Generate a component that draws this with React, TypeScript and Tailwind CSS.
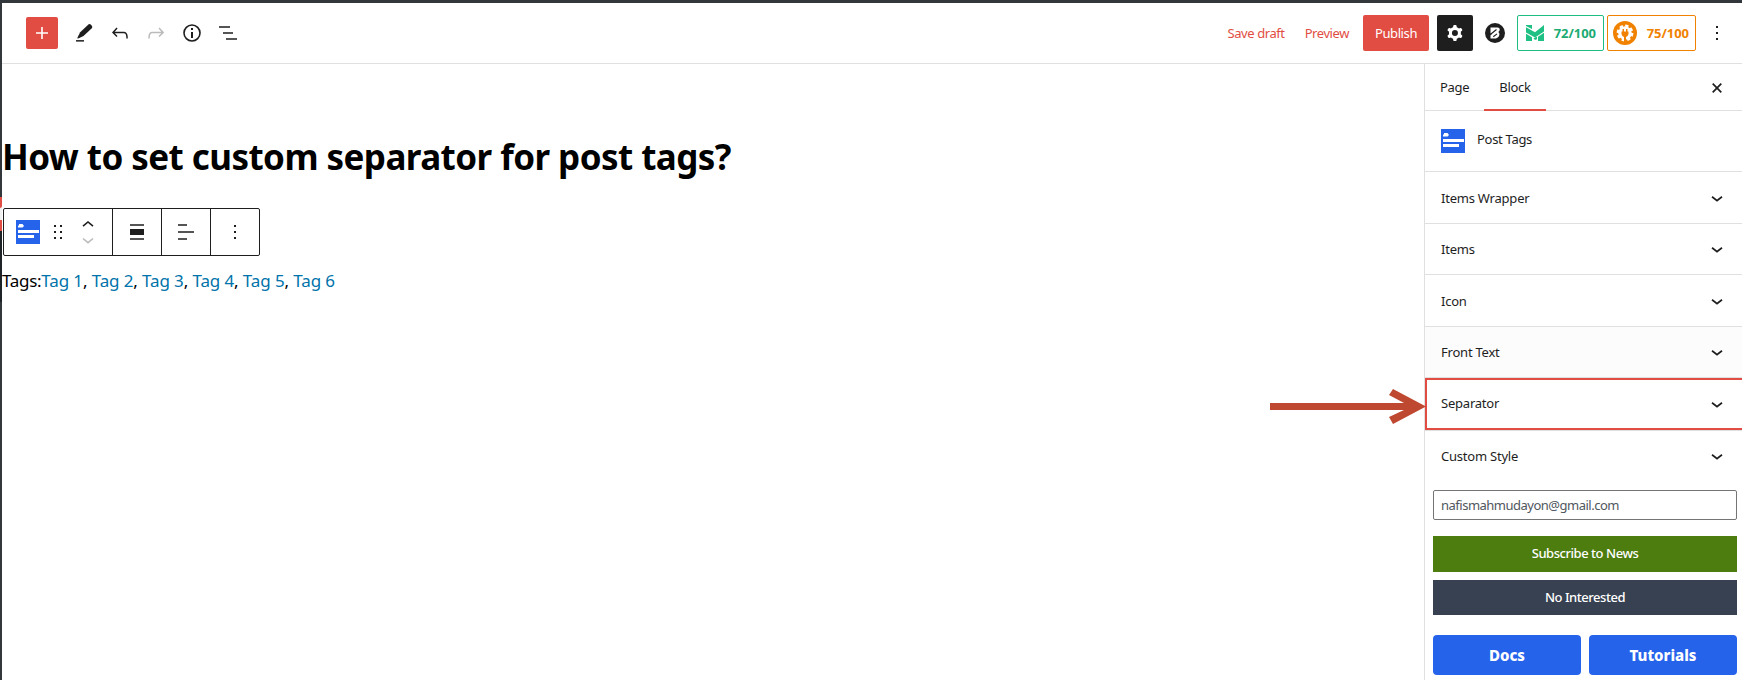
import React from "react";

function T({ children, className = "" }: { children: React.ReactNode; className?: string }) {
  return <span className={`whitespace-nowrap ${className}`}>{children}</span>;
}

function TagsIcon() {
  return (
    <svg width="24" height="24" viewBox="0 0 24 24" className="shrink-0">
      <rect width="24" height="24" fill="#2563eb" />
      <path d="M2 7.500V6l1-1V4h3.500L8 6 6.500 7.500z" fill="#fff" />
      <rect x="2" y="10" width="21" height="3" fill="#fff" />
      <rect x="2" y="15" width="16" height="3" fill="#fff" />
    </svg>
  );
}

function Chevron() {
  return (
    <svg width="24" height="24" viewBox="0 0 24 24" className="shrink-0">
      <path d="M17.500 11.400 12 15.800l-5.500-4.400 1-1.400 4.500 3.600 4.500-3.600 1 1.400z" fill="#1e1e1e" />
    </svg>
  );
}

function Row({ label, className }: { label: string; className: string }) {
  return (
    <div className={`flex shrink-0 items-center justify-between pr-[13px] pl-4 ${className}`}>
      <T className="pt-[2px] text-[13px] tracking-[-0.22px] text-[#1e1e1e]">{label}</T>
      <Chevron />
    </div>
  );
}

function Dots() {
  return (
    <svg width="24" height="24" viewBox="0 0 24 24">
      <path d="M13 19h-2v-2h2v2zm0-6h-2v-2h2v2zm0-6h-2V5h2v2z" fill="#1e1e1e" />
    </svg>
  );
}

function Header() {
  return (
    <header className="flex h-[61px] shrink-0 items-center border-b border-[#e0e0e0] pb-[7px] pl-6">
      <div className="flex flex-1 items-center gap-3 pt-[7px]">
        <div className="flex size-8 items-center justify-center rounded-[2px] bg-[#e14d43]">
          <svg width="24" height="24" viewBox="0 0 24 24">
            <path d="M18 11.200h-5.200V6h-1.600v5.200H6v1.600h5.200V18h1.600v-5.200H18z" fill="#fff" />
          </svg>
        </div>
        <svg width="24" height="24" viewBox="0 0 24 24" className="ml-0.5">
          <path d="m20.100 5.100-1.700-1.800-.8-.4-.9.400L8.200 11.300 5.600 16.300l-.3 1.300 1.500-.4 4.700-2.200 8.600-8.100z" fill="#1e1e1e" />
          <path d="M4 19.100h8v1.500H4z" fill="#1e1e1e" />
        </svg>
        <svg width="24" height="24" viewBox="0 0 24 24">
          <path d="M18.300 11.700c-.6-.6-1.400-.9-2.300-.9H6.700l2.900-3.300-1.100-1-4.500 5L8.500 16l1-1-2.700-2.700H16c.5 0 .9.200 1.300.5 1 1 1 3.400 1 4.500v.3h1.500v-.2c0-1.500 0-4.300-1.500-5.700z" fill="#1e1e1e" />
        </svg>
        <svg width="24" height="24" viewBox="0 0 24 24">
          <path d="M15.600 6.500l-1.100 1 2.900 3.300H8c-.9 0-1.700.3-2.300.9-1.400 1.500-1.400 4.200-1.400 5.600v.2h1.500v-.3c0-1.100 0-3.500 1-4.500.3-.3.7-.5 1.300-.5h9.200L14.500 15l1.100 1.100 4.600-4.600-4.600-5z" fill="#bbb" />
        </svg>
        <svg width="24" height="24" viewBox="0 0 24 24">
          <circle cx="12" cy="12" r="8" fill="none" stroke="#1e1e1e" strokeWidth="1.600" />
          <path d="M11 11h2v6h-2zM11 7h2v2h-2z" fill="#1e1e1e" />
        </svg>
        <svg width="24" height="24" viewBox="0 0 24 24">
          <path d="M3 5.200h11v1.600H3zM7 11.200h10v1.600H7zM10 17.200h11v1.600H10z" fill="#1e1e1e" />
        </svg>
      </div>
      <div className="flex items-center pt-[7px] text-[13px]">
        <T className="mr-5 pt-[2px] tracking-[-0.42px] text-[#e14d43]">Save draft</T>
        <T className="mr-[14px] pt-[2px] tracking-[-0.42px] text-[#e14d43]">Preview</T>
        <div className="mr-2 flex h-9 w-[66px] items-center justify-center rounded-[2px] bg-[#e14d43] text-white">
          <T className="pt-[2px] tracking-[-0.4px]">Publish</T>
        </div>
        <div className="mr-3 flex size-9 items-center justify-center rounded-[2px] bg-[#1e1e1e]">
          <svg width="24" height="24" viewBox="0 0 24 24">
            <path fillRule="evenodd" clipRule="evenodd" fill="#fff" d="M10.289 4.836A1 1 0 0111.275 4h1.306a1 1 0 01.987.836l.244 1.466c.787.260 1.503.679 2.108 1.218l1.393-.522a1 1 0 011.216.437l.653 1.130a1 1 0 01-.230 1.273l-1.148.944a6.025 6.025 0 010 2.435l1.149.946a1 1 0 01.230 1.272l-.653 1.130a1 1 0 01-1.216.437l-1.394-.522c-.605.540-1.320.958-2.108 1.218l-.244 1.466a1 1 0 01-.987.836h-1.306a1 1 0 01-.986-.836l-.244-1.466a5.995 5.995 0 01-2.108-1.218l-1.394.522a1 1 0 01-1.217-.436l-.653-1.131a1 1 0 01.230-1.272l1.149-.946a6.026 6.026 0 010-2.435l-1.148-.944a1 1 0 01-.230-1.272l.653-1.131a1 1 0 011.217-.437l1.393.522a5.994 5.994 0 012.108-1.218l.244-1.466zM14.929 12a3 3 0 11-6 0 3 3 0 016 0z" />
          </svg>
        </div>
        <svg width="20" height="20" viewBox="0 0 20 20" className="mr-3">
          <circle cx="10" cy="10" r="10" fill="#1e1e1e" />
          <path d="M5.500 4.500h7q2.500.3 2.200 2.600-.2 1.200-1.400 2 1.400.9 1.100 2.900-.5 3-3.400 3.500H5.500z" fill="#fff" />
          <path d="M5 11.800 11.500 6.500M8.300 13.700l3.700-2.800M4.500 10.500l2 1" stroke="#1e1e1e" strokeWidth="1.100" />
        </svg>
        <div className="mr-[3px] flex h-9 w-[87px] items-center justify-between rounded-[2px] border border-[#1fbd82] pr-[7px] pl-2 text-[#1cab73]">
          <svg width="18" height="18" viewBox="0 0 18 18" fill="#1fc084">
            <path d="M0 1h6v4L0 2zM0 3.200l9 5L18 1v6.500l-9 6L0 8.500zM0 9.700l6 3.600V17H0zM18 8.700V17h-6v-4.300zM7.500 14.300l3.500-1.500v2.400L9 16z" />
          </svg>
          <T className="pt-px font-bold tracking-[-0.05px]">72/100</T>
        </div>
        <div className="mr-[9px] flex h-9 w-[89px] items-center justify-between rounded-[2px] border border-[#f08200] pr-[6px] pl-[5px] text-[#f08200]">
          <svg width="24" height="24" viewBox="0 0 24 24">
            <circle cx="12" cy="12" r="12" fill="#f08200" />
            <circle cx="12" cy="12" r="6.800" fill="#fff" />
            <circle cx="12" cy="12" r="7.300" fill="none" stroke="#fff" strokeWidth="2.200" strokeDasharray="3.330 2.400" />
            <path d="M8.500 10.500h7V13q-.5 2.500-2.500 3v5h-2v-5q-2-.5-2.500-3zM9.500 8H11v3H9.500zM13 8h1.500v3H13z" fill="#f08200" />
          </svg>
          <T className="pt-px font-bold tracking-[-0.05px]">75/100</T>
        </div>
        <div className="mr-[13px]"><Dots /></div>
      </div>
    </header>
  );
}

function BlockToolbar() {
  return (
    <div className="ml-px flex h-12 w-[257px] rounded-[2px] border border-[#1e1e1e]">
      <div className="flex w-[109px] items-center border-r border-[#1e1e1e] pl-3">
        <TagsIcon />
        <svg width="24" height="24" viewBox="0 0 24 24" className="ml-[6px]">
          <path d="M8 5h2v2H8zM14 5h2v2h-2zM8 11h2v2H8zM14 11h2v2h-2zM8 17h2v2H8zM14 17h2v2h-2z" fill="#1e1e1e" />
        </svg>
        <svg width="24" height="46" viewBox="0 0 24 46" className="ml-[6px]" fill="none" strokeWidth="1.600">
          <path d="M7 17.200 12 13l5 4.200" stroke="#1e1e1e" />
          <path d="M7 29.500 12 33.700l5-4.200" stroke="#bbb" />
        </svg>
      </div>
      <div className="flex w-[49px] items-center justify-center border-r border-[#1e1e1e]">
        <svg width="24" height="24" viewBox="0 0 24 24">
          <path d="M5 4.200h14v1.600H5zM5 9h14v6H5zM5 18.200h14v1.600H5z" fill="#1e1e1e" />
        </svg>
      </div>
      <div className="flex w-[49px] items-center justify-center border-r border-[#1e1e1e]">
        <svg width="24" height="24" viewBox="0 0 24 24">
          <path d="M4 4.200h9v1.600H4zM4 11.200h16v1.600H4zM4 18.200h9v1.600H4z" fill="#1e1e1e" />
        </svg>
      </div>
      <div className="flex flex-1 items-center justify-center"><Dots /></div>
    </div>
  );
}

function Sidebar() {
  return (
    <aside className="flex w-[318px] shrink-0 flex-col border-l border-[#e0e0e0]">
      <div className="flex h-[47px] shrink-0 border-b border-[#e0e0e0] text-[13px] tracking-[-0.3px] text-[#1e1e1e]">
        <div className="flex w-[59px] items-center pt-[2px] pl-[15px]"><T>Page</T></div>
        <div className="-mb-px flex w-[62px] items-center justify-center border-b-2 border-[#e14d43] pt-[3px]"><T>Block</T></div>
        <div className="flex flex-1 items-center justify-end pt-px pr-5">
          <svg width="10" height="10" viewBox="0 0 10 10"><path d="M.7.700l8.600 8.600M9.300.7.700 9.300" stroke="#1e1e1e" strokeWidth="1.700" /></svg>
        </div>
      </div>
      <div className="flex h-[61px] shrink-0 gap-3 border-b border-[#e0e0e0] pt-[18px] pl-4">
        <TagsIcon />
        <T className="text-[13px] leading-[21px] tracking-[-0.3px] text-[#1e1e1e]">Post Tags</T>
      </div>
      <Row label="Items Wrapper" className="h-[52px] border-b border-[#e0e0e0]" />
      <Row label="Items" className="h-[51px] border-b border-[#e0e0e0]" />
      <Row label="Icon" className="h-[52px] border-b border-[#e0e0e0]" />
      <Row label="Front Text" className="h-[51px] border-b border-[#e0e0e0] bg-[#fcfcfc]" />
      <div className="h-[53px] shrink-0 border-b border-[#e0e0e0]">
        <div className="flex h-[52px] items-center justify-between border-2 border-r-0 border-[#e14d43] pr-[13px] pl-[14px]">
          <T className="text-[13px] tracking-[-0.22px] text-[#1e1e1e]">Separator</T>
          <Chevron />
        </div>
      </div>
      <Row label="Custom Style" className="mb-[3px] h-[50px]" />
      <div className="flex flex-col pt-[6px] pr-[5px] pl-2 text-[13px] text-white">
        <div className="flex h-[30px] items-center rounded-[2px] border border-[#757575] pt-[2px] pl-[7px] text-[#50575e]">
          <T className="tracking-[-0.5px]">nafismahmudayon@gmail.com</T>
        </div>
        <div className="mt-4 flex h-9 items-center justify-center bg-[#4d7c0f]"><T className="font-medium tracking-[-0.46px]">Subscribe to News</T></div>
        <div className="mt-2 flex h-[35px] items-center justify-center bg-[#374151]"><T className="pt-px font-medium tracking-[-0.46px]">No Interested</T></div>
        <div className="mt-5 flex h-10 gap-2 text-[15px] font-extrabold">
          <div className="flex flex-1 items-center justify-center rounded bg-[#2563eb]"><T>Docs</T></div>
          <div className="flex flex-1 items-center justify-center rounded bg-[#2563eb]"><T>Tutorials</T></div>
        </div>
      </div>
    </aside>
  );
}

function EdgeStrip() {
  return (
    <div className="flex w-[2px] shrink-0 flex-col">
      <div className="h-[194px] bg-[#32373c]" />
      <div className="h-[11px] rounded-br-[2px] bg-[#e14d43]" />
      <div className="h-3 bg-[#f0f0f1]" />
      <div className="h-[11px] bg-[#e14d43]" />
      <div className="h-[71px] bg-[#1d2327]" />
      <div className="flex-1 bg-[#32373c]" />
    </div>
  );
}

export default function App() {
  const tags = ["Tag 1", "Tag 2", "Tag 3", "Tag 4", "Tag 5", "Tag 6"];
  return (
    <div className="relative flex h-[680px] w-[1742px] overflow-hidden border-t-3 border-[#32373c] bg-white font-['Noto_Sans',sans-serif]">
      <EdgeStrip />
      <div className="flex min-w-0 flex-1 flex-col">
        <Header />
        <div className="flex min-h-0 flex-1">
          <main className="flex flex-1 flex-col">
            <h1 className="mt-[68px] h-[50px] text-[35px] leading-[50px] font-bold tracking-[-0.56px] whitespace-nowrap text-black">How to set custom separator for post tags?</h1>
            <div className="mt-[26px]"><BlockToolbar /></div>
            <div className="mt-[11px] text-[17px] leading-7 tracking-[-0.12px] whitespace-nowrap text-black">
              <span className="tracking-[-0.3px]">Tags:</span>
              {tags.map((t, i) => (
                <React.Fragment key={t}>
                  <span className="text-[#0073aa]">{t}</span>
                  {i < tags.length - 1 && <span>, </span>}
                </React.Fragment>
              ))}
            </div>
          </main>
          <Sidebar />
        </div>
      </div>
      <svg width="158" height="36" viewBox="0 0 158 36" className="absolute top-[386px] left-[1270px]">
        <path d="M0 14h134l-15-8 4-6 33 17.500L123 35l-4-7 15-7H0z" fill="#bf4830" />
      </svg>
    </div>
  );
}
